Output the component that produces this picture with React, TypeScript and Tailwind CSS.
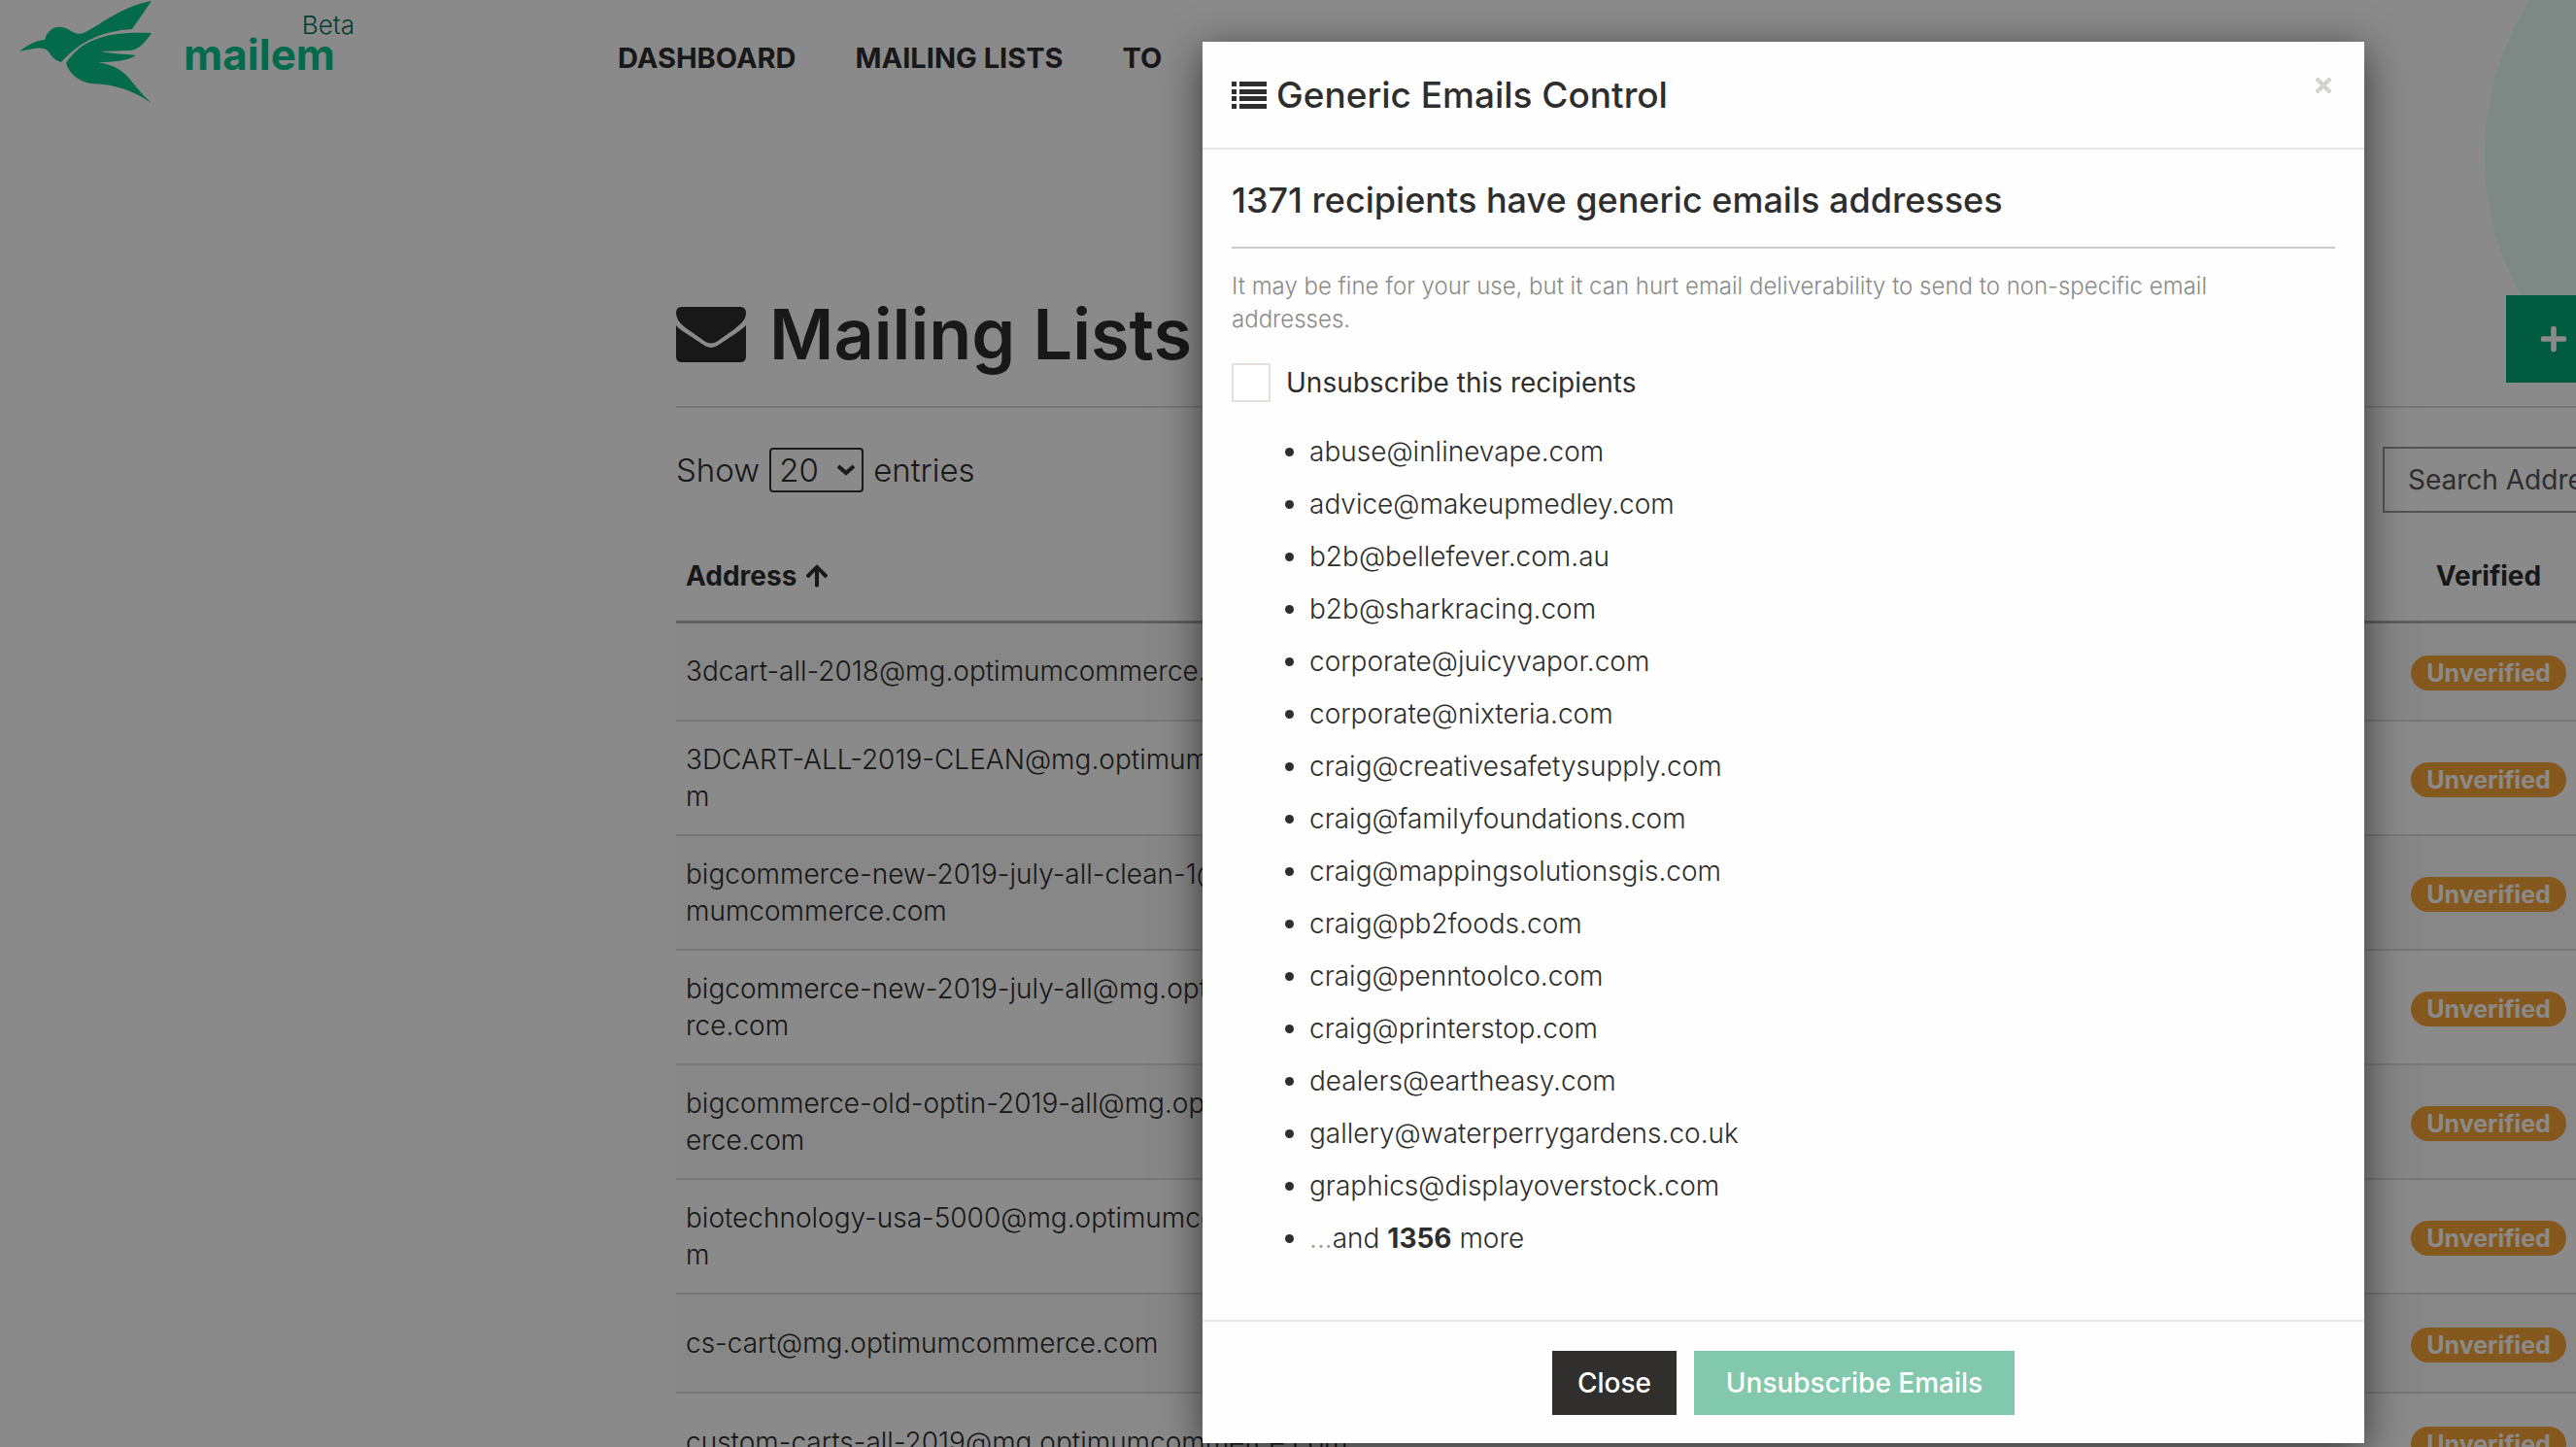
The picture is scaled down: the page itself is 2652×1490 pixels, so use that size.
import { useState } from "react";
import { FaArrowUp, FaPlus, FaTimes } from "react-icons/fa";

const navLinks = ["Dashboard", "Mailing lists", "To"];

// long addresses break onto a second line
const mailingLists = [
  { lines: ["3dcart-all-2018@mg.optimumcommerce.com"] },
  { lines: ["3DCART-ALL-2019-CLEAN@mg.optimumcommerce.co", "m"] },
  { lines: ["bigcommerce-new-2019-july-all-clean-1@mg.opti", "mumcommerce.com"] },
  { lines: ["bigcommerce-new-2019-july-all@mg.optimumcomme", "rce.com"] },
  { lines: ["bigcommerce-old-optin-2019-all@mg.optimumcomm", "erce.com"] },
  { lines: ["biotechnology-usa-5000@mg.optimumcommerce.co", "m"] },
  { lines: ["cs-cart@mg.optimumcommerce.com"] },
  { lines: ["custom-carts-all-2019@mg.optimumcommerce.com"] },
];

const genericEmails = [
  "abuse@inlinevape.com",
  "advice@makeupmedley.com",
  "b2b@bellefever.com.au",
  "b2b@sharkracing.com",
  "corporate@juicyvapor.com",
  "corporate@nixteria.com",
  "craig@creativesafetysupply.com",
  "craig@familyfoundations.com",
  "craig@mappingsolutionsgis.com",
  "craig@pb2foods.com",
  "craig@penntoolco.com",
  "craig@printerstop.com",
  "dealers@eartheasy.com",
  "gallery@waterperrygardens.co.uk",
  "graphics@displayoverstock.com",
];

function BirdLogo() {
  return (
    <svg viewBox="0 0 140 108" className="w-[140px] h-[108px] fill-[#08c48c]" aria-hidden="true">
      <path d="M0 53 C9 46 16 42 26 41 C29 31 36 27 44 28 C53 29 55 37 66 34 C82 27 103 7 136 1 L116 30 C86 32 64 41 43 64 C35 62 32 56 29 52 C22 47 12 51 0 53Z" />
      <path d="M48 65 C64 41 88 32 136 34 C129 44 123 52 112 52 L84 53 C96 56 110 55 120 57 C110 63 97 64 81 64 C114 70 111 84 136 106 C112 90 94 87 74 86 C60 84 51 75 48 65Z" />
    </svg>
  );
}

function EnvelopeIcon() {
  return (
    <svg viewBox="0 0 72 57" className="w-[72px] h-[57px] fill-current" aria-hidden="true">
      <path d="M6 0 H66 Q72 0 72 6 C72 14 65 19 60 23 L43 35 Q36 40 29 35 L12 23 C6 19 0 13 0 6 Q0 0 6 0Z" />
      <path d="M0 19 C3 23 7 25 10 27 L28 39 Q36 45 44 39 L62 27 C66 24 69 22 72 19 V51 Q72 57 66 57 H6 Q0 57 0 51Z" />
    </svg>
  );
}

function ListIcon() {
  return (
    <svg viewBox="0 0 36 28" className="w-9 h-7 fill-current" aria-hidden="true">
      {[0, 8, 15, 23].map((y) => (
        <g key={y}>
          <rect x="0" y={y} width="5" height="5" />
          <rect x="8" y={y} width="28" height="5" />
        </g>
      ))}
    </svg>
  );
}

function Header() {
  return (
    <header className="flex h-[120px] items-start">
      <a href="#home" className="flex w-[636px] pl-5">
        <BirdLogo />
        <span className="flex w-[205px] flex-col items-end pt-3 text-[#08c48c]">
          <span className="text-[26px] leading-7 font-light text-[#0a7456]">Beta</span>
          <span className="pr-5 text-[44px] leading-8 font-bold">mailem</span>
        </span>
      </a>
      <nav className="flex gap-[61px] pt-10">
        {navLinks.map((label) => (
          <a key={label} href="#nav" className="text-[29px] leading-10 font-bold uppercase">
            {label}
          </a>
        ))}
      </nav>
    </header>
  );
}

function MailingListsPage() {
  return (
    <main className="pt-[184px] pl-[696px]">
      <div className="flex h-[116px] items-start justify-between border-b-2 border-[#dcdcdc]">
        <h1 className="flex items-center gap-6 text-[72px] leading-20 font-semibold">
          <EnvelopeIcon />
          Mailing Lists
        </h1>
        <button aria-label="New mailing list" className="flex h-[90px] w-[72px] items-center bg-[#00a876] pl-[34px] text-[30px] text-white">
          <FaPlus />
        </button>
      </div>

      <div className="flex items-start justify-between pt-10">
        <label className="flex h-12 items-center gap-[10px] text-[33px] leading-12 font-light">
          Show
          <span className="relative">
            <select defaultValue="20" className="block h-[46px] w-[97px] appearance-none rounded-sm border-2 border-[#333] bg-transparent pl-2 leading-10">
              <option>20</option>
              <option>50</option>
            </select>
            <svg viewBox="0 0 20 12" className="pointer-events-none absolute top-[17px] right-2 h-3 w-5 fill-none stroke-[#333] stroke-4">
              <path d="M2 2 L10 9 L18 2" />
            </svg>
          </span>
          entries
        </label>
        <input
          type="text"
          aria-label="Search address"
          placeholder="Search Address"
          className="h-[68px] w-[199px] border-2 border-r-0 border-[#999] pl-6 text-[28px] placeholder:text-[#555]"
        />
      </div>

      <table className="mt-5 w-full border-collapse text-[28px] leading-[38px]">
        <thead>
          <tr className="h-[92px] border-b-3 border-[#b0b0b0] text-left">
            <th className="px-[10px] font-bold">
              <span className="flex items-center gap-2">
                Address <FaArrowUp className="text-[26px]" />
              </span>
            </th>
            <th className="w-[180px] text-center font-bold">Verified</th>
          </tr>
        </thead>
        <tbody>
          {mailingLists.map((list) => (
            <tr key={list.lines[0]} className="h-[102px] border-b-2 border-[#dcdcdc] odd:bg-[#f9f9f9]">
              <td className="px-[10px] py-5 font-light">
                {list.lines.map((line) => (
                  <span key={line} className="block">{line}</span>
                ))}
              </td>
              <td className="text-center">
                <span className="inline-block h-9 w-40 rounded-full bg-[#f6a338] align-middle text-[25px] leading-9 font-bold text-white">
                  Unverified
                </span>
              </td>
            </tr>
          ))}
        </tbody>
      </table>
    </main>
  );
}

function GenericEmailsModal() {
  const [unsubscribe, setUnsubscribe] = useState(false);

  return (
    <div role="dialog" aria-labelledby="modal-title" className="w-[1196px] bg-[#fefefe] text-[#2e2e2e] shadow-[0_10px_40px_rgba(0,0,0,0.6)]">
      <div className="flex h-[111px] items-center justify-between border-b-2 border-[#e5e5e5] px-[30px]">
        <h2 id="modal-title" className="flex items-center gap-[10px] text-[37px] leading-12 font-medium">
          <ListIcon />
          Generic Emails Control
        </h2>
        <button aria-label="Close dialog" className="mb-5 text-[24px] text-[#d2d2d0]">
          <FaTimes />
        </button>
      </div>

      <div className="h-[1205px] px-[30px] pt-7">
        <h3 className="border-b-2 border-[#ccc] pb-6 text-[36px] leading-12 font-medium">
          1371 recipients have generic emails addresses
        </h3>
        <p className="mt-[22px] w-[1100px] text-[24px] leading-[34px] font-light text-[#8a8a8a]">
          It may be fine for your use, but it can hurt email deliverability to send to non-specific email addresses.
        </p>
        <label className="mt-7 flex items-center gap-4 text-[28px] leading-10">
          <input
            type="checkbox"
            checked={unsubscribe}
            onChange={(e) => setUnsubscribe(e.target.checked)}
            className="size-10 appearance-none border-2 border-[#e5e0dc] bg-white checked:bg-[#00a876]"
          />
          Unsubscribe this recipients
        </label>
        <ul className="mt-6 list-disc pl-20 text-[28px] leading-[54px] font-light">
          {genericEmails.map((email) => (
            <li key={email}>{email}</li>
          ))}
          <li>
            <span className="text-[#999]">...</span>and <b className="font-bold">1356</b> more
          </li>
        </ul>
      </div>

      <div className="flex h-[127px] items-center justify-center gap-[18px] border-t-2 border-[#e5e5e5] text-[28px] font-medium text-white">
        <button className="h-[66px] w-32 bg-[#302f2e]">Close</button>
        <button className="h-[66px] w-[330px] bg-[#82c8ad]">Unsubscribe Emails</button>
      </div>
    </div>
  );
}

export default function App() {
  return (
    <div className="relative h-screen overflow-hidden bg-white font-['Inter','Liberation_Sans',sans-serif] text-[#2d2d2d]">
      <div className="absolute -top-[140px] -right-[506px] size-[600px] rounded-full bg-[#e6fef6]" />
      <div className="relative">
        <Header />
        <MailingListsPage />
      </div>

      {/* Overlay */}
      <div className="absolute inset-0 flex items-start bg-black/46 pt-[43px] pl-[1238px]">
        <GenericEmailsModal />
      </div>
    </div>
  );
}
